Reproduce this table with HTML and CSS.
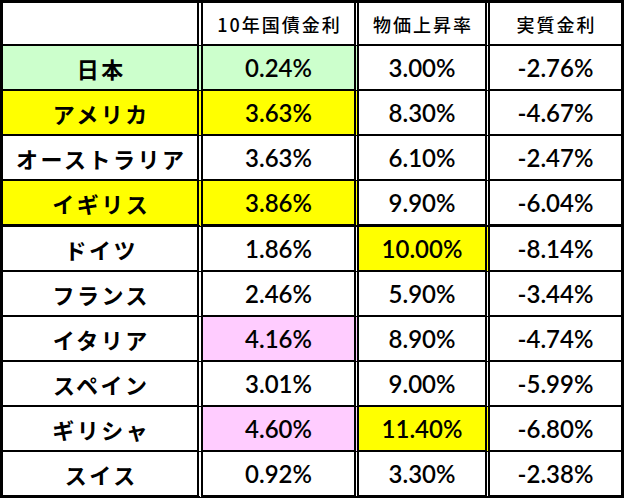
FILE: index.html
```html
<!DOCTYPE html>
<html lang="ja">
<head>
<meta charset="utf-8">
<title>実質金利</title>
<link rel="stylesheet" href="styles.css">
</head>
<body>
<table class="rates">
  <thead>
    <tr class="head">
      <th class="c1"></th>
      <th class="c2">10年国債金利</th>
      <th class="c3">物価上昇率</th>
      <th class="c4">実質金利</th>
    </tr>
  </thead>
  <tbody>
    <tr>
      <td class="c1 name green">日本</td>
      <td class="c2 num green">0.24%</td>
      <td class="c3 num">3.00%</td>
      <td class="c4 num">-2.76%</td>
    </tr>
    <tr>
      <td class="c1 name yellow">アメリカ</td>
      <td class="c2 num yellow">3.63%</td>
      <td class="c3 num">8.30%</td>
      <td class="c4 num">-4.67%</td>
    </tr>
    <tr>
      <td class="c1 name">オーストラリア</td>
      <td class="c2 num">3.63%</td>
      <td class="c3 num">6.10%</td>
      <td class="c4 num">-2.47%</td>
    </tr>
    <tr class="thick">
      <td class="c1 name yellow">イギリス</td>
      <td class="c2 num yellow">3.86%</td>
      <td class="c3 num">9.90%</td>
      <td class="c4 num">-6.04%</td>
    </tr>
    <tr>
      <td class="c1 name">ドイツ</td>
      <td class="c2 num">1.86%</td>
      <td class="c3 num yellow">10.00%</td>
      <td class="c4 num">-8.14%</td>
    </tr>
    <tr>
      <td class="c1 name">フランス</td>
      <td class="c2 num">2.46%</td>
      <td class="c3 num">5.90%</td>
      <td class="c4 num">-3.44%</td>
    </tr>
    <tr>
      <td class="c1 name">イタリア</td>
      <td class="c2 num pink">4.16%</td>
      <td class="c3 num">8.90%</td>
      <td class="c4 num">-4.74%</td>
    </tr>
    <tr>
      <td class="c1 name">スペイン</td>
      <td class="c2 num">3.01%</td>
      <td class="c3 num">9.00%</td>
      <td class="c4 num">-5.99%</td>
    </tr>
    <tr>
      <td class="c1 name">ギリシャ</td>
      <td class="c2 num pink">4.60%</td>
      <td class="c3 num yellow">11.40%</td>
      <td class="c4 num">-6.80%</td>
    </tr>
    <tr class="thick">
      <td class="c1 name">スイス</td>
      <td class="c2 num">0.92%</td>
      <td class="c3 num">3.30%</td>
      <td class="c4 num">-2.38%</td>
    </tr>
  </tbody>
</table>
</body>
</html>
```

FILE: styles.css
```css
html, body {
  margin: 0;
  padding: 0;
  background: #ffffff;
}

.rates {
  border-collapse: separate;
  border-spacing: 0;
  border-top: 3px solid #000;
  border-left: 3px solid #000;
  color: #000;
}

.rates th,
.rates td {
  padding: 0;
  text-align: center;
  vertical-align: middle;
  height: 43px;
  border-bottom: 2px solid #000;
  white-space: nowrap;
  overflow: hidden;
}

.rates .head th {
  height: 41px;
  font-family: "Noto Sans CJK JP", "Noto Sans", sans-serif;
  font-weight: 500;
  font-size: 18px;
  letter-spacing: 2px;
  text-indent: 2px;
}

.rates .thick td {
  border-bottom-width: 3px;
}

.c1 {
  width: 194px;
  border-right: 6px double #000;
}
.c2 {
  width: 151px;
  border-right: 5px double #000;
}
.c3 {
  width: 126px;
  border-right: 5px double #000;
}
.c4 {
  width: 131px;
  border-right: 3px solid #000;
}

.name {
  font-family: "Noto Sans CJK JP", sans-serif;
  font-weight: 700;
  font-size: 22px;
  letter-spacing: 2.5px;
  text-indent: 2.5px;
}

.num {
  font-family: Lato, "Liberation Sans", sans-serif;
  font-weight: 600;
  font-size: 24px;
}

.green { background: #ccffcc; }
.yellow { background: #ffff00; }
.pink { background: #ffccff; }
```
